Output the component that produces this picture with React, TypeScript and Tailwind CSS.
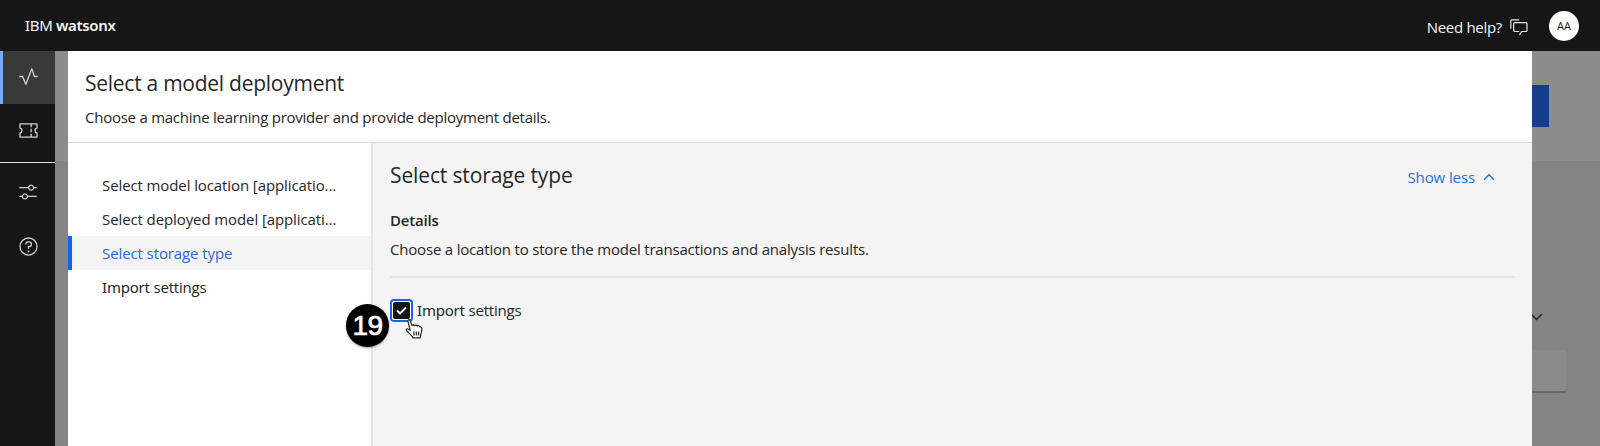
import React from "react";

const sans = "font-['Open_Sans',sans-serif]";

function ActivityIcon() {
  return (
    <svg className="block size-[21px]" viewBox="0 0 32 32" fill="#d0d0d0">
      <path d="M12 29a1 1 0 0 1-.92-.62L6.33 17H2v-2h5a1 1 0 0 1 .92.62L12 25.28 20.06 3.65A1 1 0 0 1 21 3a1 1 0 0 1 .93.68L25.72 15H30v2h-5a1 1 0 0 1-.95-.68L21 7 12.94 28.35A1 1 0 0 1 12 29Z" />
    </svg>
  );
}

function TicketIcon() {
  return (
    <svg className="block size-[21px]" viewBox="0 0 32 32" fill="none" stroke="#d0d0d0" strokeWidth="2">
      <path d="M3 6h26v6.1a4 4 0 0 0 0 7.8V26H3v-6.1a4 4 0 0 0 0-7.8Z" strokeLinejoin="round" />
      <path d="M20 6v5M20 13.5v5M20 21v5" />
    </svg>
  );
}

function SettingsIcon() {
  return (
    <svg className="block size-[20px]" viewBox="0 0 32 32" fill="#d0d0d0">
      <path d="M30 8h-4.1a5 5 0 0 0-9.8 0H2v2h14.1a5 5 0 0 0 9.8 0H30Zm-9 4a3 3 0 1 1 3-3 3 3 0 0 1-3 3ZM2 24h4.1a5 5 0 0 0 9.8 0H30v-2H15.9a5 5 0 0 0-9.8 0H2Zm9-4a3 3 0 1 1-3 3 3 3 0 0 1 3-3Z" />
    </svg>
  );
}

function HelpIcon() {
  return (
    <svg className="block size-[21px]" viewBox="0 0 32 32" fill="#d0d0d0">
      <path d="M16 2a14 14 0 1 0 14 14A14 14 0 0 0 16 2Zm0 26a12 12 0 1 1 12-12 12 12 0 0 1-12 12Z" />
      <circle cx="16" cy="23.5" r="1.5" />
      <path d="M17 8h-1.5a4.49 4.49 0 0 0-4.5 4.5v.5h2v-.5a2.5 2.5 0 0 1 2.5-2.5H17a2.5 2.5 0 0 1 0 5h-2v4.5h2V17a4.5 4.5 0 0 0 0-9Z" />
    </svg>
  );
}

function ChatIcon() {
  return (
    <svg className="mt-[3px] block h-[17px] w-[18px]" viewBox="0 0 18 17" fill="none" stroke="#e8e8e8" strokeWidth="1.2">
      <path d="M.8 9.7V1.8q0-1 1-1h7.4" />
      <path d="M9.4 15.9l2.3-3.4h4q1.3 0 1.3-1.3V5q0-1.3-1.3-1.3H5Q3.7 3.7 3.7 5v6.2q0 1.3 1.3 1.3h4.2" />
    </svg>
  );
}

function HandCursor() {
  return (
    <svg className="block h-[21px] w-[18px]" viewBox="0 0 18 21" fill="#fff" stroke="#222" strokeWidth="1.2" strokeLinejoin="round">
      <path d="M3 2.200C2.500.6 4.600.1 5.200 1.700L7 6.600c.5-1.200 2.200-1 2.600.1.600-1 2.200-.8 2.600.4.800-.8 2.200-.4 2.500.8.900-.3 1.900.3 2 1.400.2 2.200.1 4.200-.9 6l-.6 3.600H8.200c-.9-2-3.200-3.800-5-5.600C2.300 12.400 1 11.500 1.200 10.600c.4-1.200 2.300-.7 4 .7L3 2.200Z" />
      <path d="M8.800 12.500l.4 4M11.200 12.500l.2 4M13.600 12.500v4" />
    </svg>
  );
}

const steps = [
  { label: "Select model location [applicatio..." },
  { label: "Select deployed model [applicati..." },
  { label: "Select storage type", active: true },
];

export default function App() {
  return (
    <div className={`flex h-[446px] w-[1600px] flex-col overflow-hidden text-[15px] leading-5 tracking-[-0.2px] text-[#262626] ${sans}`}>
      <header className="flex h-[51px] shrink-0 items-center bg-[#161616] pr-[21px] pl-[25px] text-[#f4f4f4]">
        <div className="mb-[2px] flex-1 font-['Noto_Sans',sans-serif] tracking-[-0.35px] whitespace-nowrap">
          IBM <span className="font-semibold">watsonx</span>
        </div>
        <span className="mt-[3px] mr-[8px] tracking-[-0.3px] whitespace-nowrap">Need help?</span>
        <ChatIcon />
        <div className="ml-[21px] flex size-[30px] items-center justify-center rounded-full bg-white text-[11px] tracking-normal text-[#161616]">AA</div>
      </header>

      <div className="flex flex-1">
        <nav className="flex w-[55px] shrink-0 flex-col bg-[#161616]">
          <div className="flex h-[53px] items-center border-l-[3px] border-[#78a9ff] bg-[#393939] pb-[2px] pl-[15px]"><ActivityIcon /></div>
          <div className="flex h-[59px] items-start border-b border-[#e0e0e0] pt-[16px] pl-[18px]"><TicketIcon /></div>
          <div className="flex h-[60px] items-center pb-[2px] pl-[18px]"><SettingsIcon /></div>
          <div className="flex h-[50px] items-center pb-[3px] pl-[18px]"><HelpIcon /></div>
        </nav>

        <div className="flex w-[13px] shrink-0 flex-col bg-[#848484]">
          <div className="h-[110px] bg-[#8c8c8c]" />
        </div>

        <section className="flex w-[1464px] shrink-0 flex-col bg-white">
          <div className="h-[92px] border-b border-[#dcdcdc] pt-[17px] pl-[17px] whitespace-nowrap">
            <h1 className="text-[21px] leading-[30px] tracking-[-0.26px]">Select a model deployment</h1>
            <p className="mt-[9px] tracking-[-0.25px]">Choose a machine learning provider and provide deployment details.</p>
          </div>
          <div className="flex flex-1">
            <ul className="w-[303px] shrink-0 pt-[25px] tracking-[-0.1px]">
              {steps.map((s) => (
                <li
                  key={s.label}
                  className={`flex h-[34px] items-center border-l-4 pl-[30px] whitespace-nowrap ${
                    s.active ? "border-[#0f62fe] bg-[#f4f4f4] text-[#2b66dc]" : "border-transparent"
                  }`}
                >
                  {s.label}
                </li>
              ))}
              <li className="flex h-[34px] items-center pl-[34px] tracking-[-0.2px] whitespace-pre">
                <span><span className="font-['Noto_Sans',sans-serif]">Import</span> settings</span>
              </li>
            </ul>
            <div className="relative flex-1 border-l-2 border-[#e4e4e4] bg-[#f4f4f4] pr-[17px] pl-[17px]">
              <div className="flex items-start justify-between pt-[17px]">
                <h2 className="text-[21px] leading-[30px] tracking-[-0.13px] whitespace-nowrap">Select storage type</h2>
                <div className="mt-[7px] mr-[20px] flex items-center gap-2 tracking-[-0.1px] whitespace-nowrap text-[#2f6be0]">
                  Show less
                  <svg className="block h-[8px] w-[12px]" viewBox="0 0 12 8" fill="none" stroke="currentColor" strokeWidth="1.5">
                    <path d="M1 6.800l5-5 5 5" />
                  </svg>
                </div>
              </div>
              <h3 className="mt-[20px] leading-[20px] font-semibold">Details</h3>
              <p className="mt-[9px] tracking-[-0.19px] whitespace-nowrap">Choose a location to store the model transactions and analysis results.</p>
              <div className="mt-[17px] h-[2px] bg-[#e6e6e6]" />
              <div className="mt-[20px] flex h-[24px] items-center">
                <div className="flex size-[23px] items-center justify-center rounded-[4px] border-2 border-[#1c62e8] bg-white">
                  <div className="flex size-[17px] items-center justify-center rounded-[2px] bg-[#161616]">
                    <svg className="block size-[11px]" viewBox="0 0 11 11" fill="none" stroke="#fff" strokeWidth="1.8">
                      <path d="M1 5.500l3 3 6-6" />
                    </svg>
                  </div>
                </div>
                <span className="ml-[4px] whitespace-pre"><span className="font-['Noto_Sans',sans-serif]">Import</span> settings</span>
              </div>
              <div className="absolute top-[161px] left-[-27px] flex size-[43px] items-center justify-center rounded-full bg-black font-['Liberation_Sans',sans-serif] text-[28px] tracking-[-0.5px] text-white shadow-[0_1px_2px_rgba(0,0,0,0.4)] [-webkit-text-stroke:0.7px_white]">19</div>
              <div className="absolute top-[176px] left-[32px]"><HandCursor /></div>
            </div>
          </div>
        </section>

        <aside className="flex flex-1 flex-col bg-[#848484]">
          <div className="h-[110px] bg-[#8c8c8c] pt-[34px]">
            <div className="h-[42px] w-[17px] bg-[#163c8c]" />
          </div>
          <svg className="mt-[152px] block h-[8px] w-[11px]" viewBox="0 0 11 8" fill="none" stroke="#262626" strokeWidth="1.5">
            <path d="M-1 1l5.500 5.500L10 1" />
          </svg>
          <div className="mt-[29px] h-[43px] w-[34px] border-b-2 border-[#666] bg-[#8a8a8a]" />
        </aside>
      </div>
    </div>
  );
}
